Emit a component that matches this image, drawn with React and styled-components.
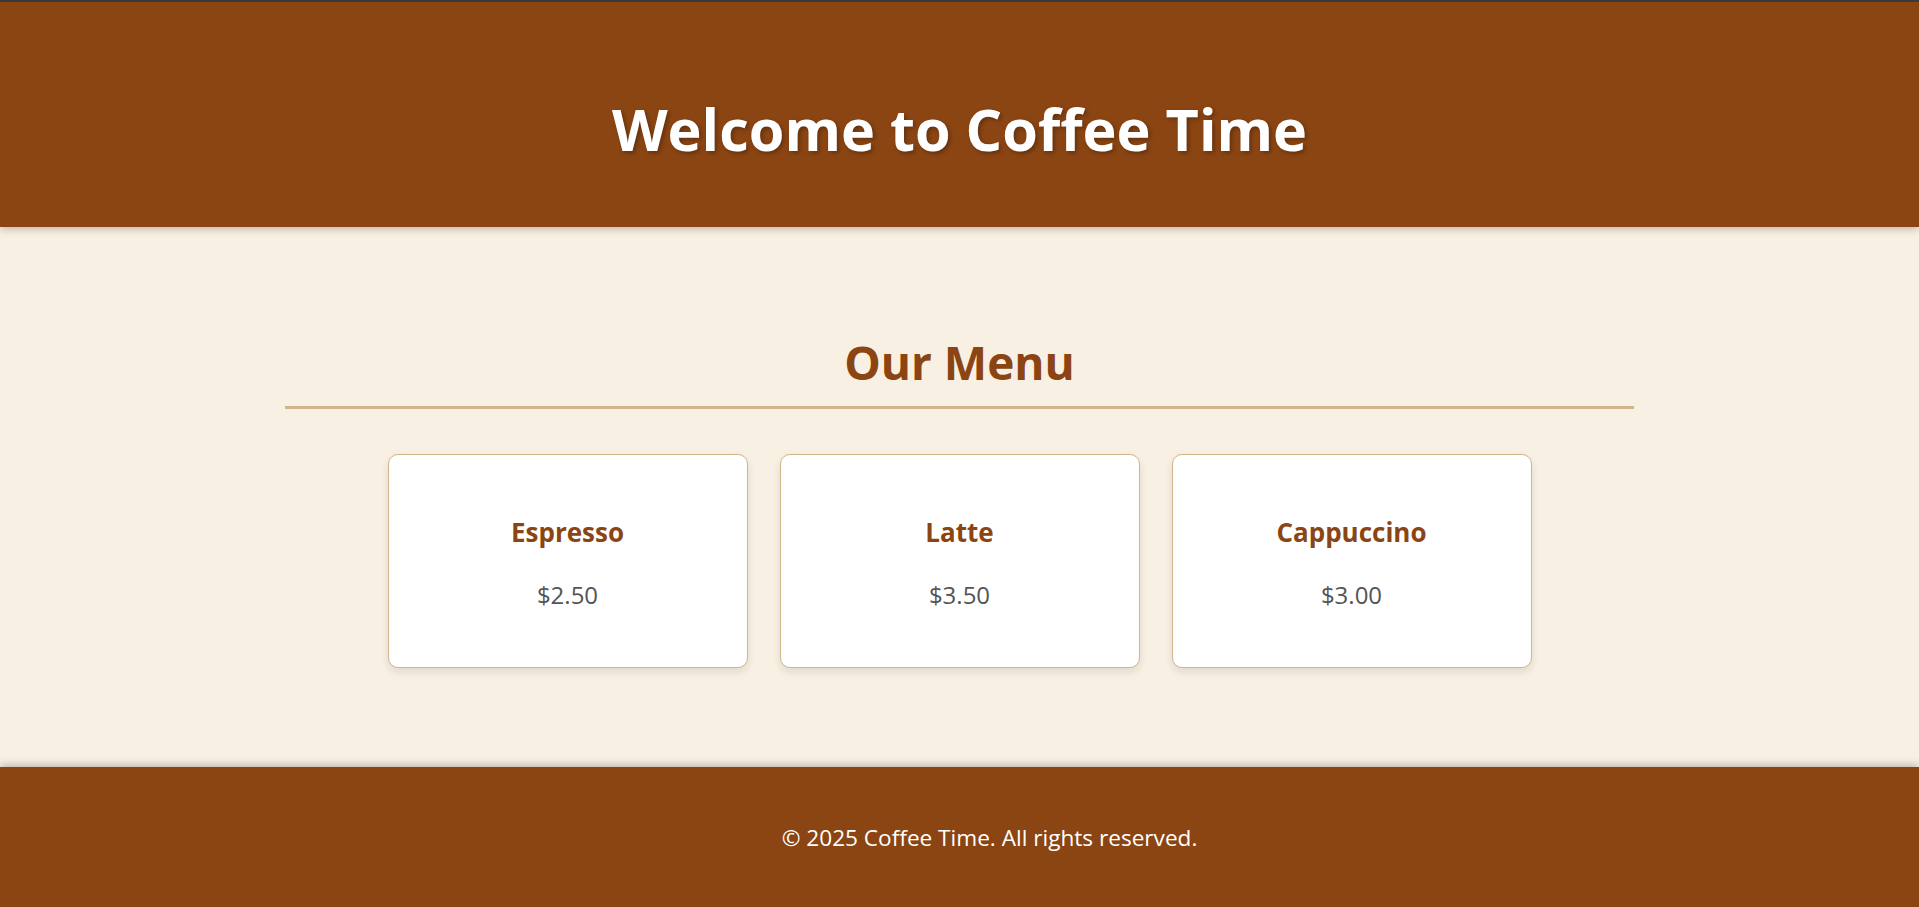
import React from "react";
import styled, { createGlobalStyle } from "styled-components";

const menu = [
  { name: "Espresso", price: "$2.50" },
  { name: "Latte", price: "$3.50" },
  { name: "Cappuccino", price: "$3.00" },
];

const GlobalStyle = createGlobalStyle`
  html, body {
    margin: 0;
    padding: 0;
  }
  body {
    background: #f8f0e3;
    font-family: "Open Sans", "Noto Sans", sans-serif;
    overflow: hidden;
  }
  * {
    box-sizing: border-box;
  }
`;

const App = () => {
  return (
    <>
      <GlobalStyle />
      <Header>
        <Title>Welcome to Coffee Time</Title>
      </Header>
      <Main>
        <Section>
          <SectionTitle>Our Menu</SectionTitle>
          <Cards>
            {menu.map((item) => (
              <Card key={item.name}>
                <ItemName>{item.name}</ItemName>
                <Price>{item.price}</Price>
              </Card>
            ))}
          </Cards>
        </Section>
      </Main>
      <Footer>
        <FooterText>&copy; 2025 Coffee Time. All rights reserved.</FooterText>
      </Footer>
    </>
  );
};

const Header = styled.header`
  background: #8b4513;
  border-top: 2px solid #3a3a3a;
  padding: 89px 0 60px;
  text-align: center;
  box-shadow: 0 2px 8px rgba(0, 0, 0, 0.25);
`;

const Title = styled.h1`
  margin: 0;
  color: #ffffff;
  font-size: 57.6px;
  line-height: 76px;
  font-weight: 700;
  text-shadow: 2px 2px 4px rgba(0, 0, 0, 0.3);
`;

const Main = styled.main`
  padding: 105px 0 99px;
`;

const Section = styled.section`
  width: 1349px;
  margin: 0 auto;
`;

const SectionTitle = styled.h2`
  margin: 0;
  padding-bottom: 13px;
  border-bottom: 3px solid #d2b48c;
  color: #8b4513;
  font-size: 46px;
  line-height: 61px;
  font-weight: 700;
  text-align: center;
`;

const Cards = styled.div`
  display: flex;
  justify-content: center;
  gap: 32px;
  margin-top: 45px;
`;

const Card = styled.div`
  width: 360px;
  padding: 60px 20px 56px;
  background: #ffffff;
  border: 1px solid #d2b48c;
  border-radius: 10px;
  box-shadow: 0 4px 8px rgba(0, 0, 0, 0.1);
  text-align: center;
`;

const ItemName = styled.h3`
  margin: 0 0 28px;
  color: #8b4513;
  font-size: 26px;
  line-height: 35px;
  font-weight: 700;
`;

const Price = styled.p`
  margin: 0;
  color: #555555;
  font-size: 24px;
  line-height: 33px;
`;

const Footer = styled.footer`
  background: #8b4513;
  padding: 56px 0 54px 60px;
  text-align: center;
  box-shadow: 0 -2px 8px rgba(0, 0, 0, 0.25);
`;

const FooterText = styled.p`
  margin: 0;
  color: #ffffff;
  font-size: 22.6px;
  line-height: 30px;
`;

export default App;
